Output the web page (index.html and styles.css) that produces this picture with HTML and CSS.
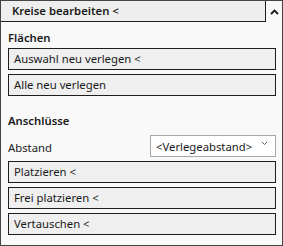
FILE: index.html
```html
<!DOCTYPE html>
<html>
<head>
<meta charset="utf-8">
<link rel="stylesheet" href="styles.css">
</head>
<body>
<div class="panel">
  <div class="header">
    <div class="tab">Kreise bearbeiten &lt;</div>
    <div class="collapse">
      <svg width="9" height="6" viewBox="0 0 9 6"><path d="M1 5 L4.5 1.5 L8 5" fill="none" stroke="#1a1a1a" stroke-width="1.8"/></svg>
    </div>
  </div>
  <div class="content">
    <div class="section-title first">Flächen</div>
    <div class="btn">Auswahl neu verlegen &lt;</div>
    <div class="btn">Alle neu verlegen</div>
    <div class="section-title second">Anschlüsse</div>
    <div class="row">
      <span class="label">Abstand</span>
      <div class="select">
        <span>&lt;Verlegeabstand&gt;</span>
        <svg width="7" height="5" viewBox="0 0 7 5"><path d="M1 1 L3.5 3.5 L6 1" fill="none" stroke="#555" stroke-width="1"/></svg>
      </div>
    </div>
    <div class="btn">Platzieren &lt;</div>
    <div class="btn">Frei platzieren &lt;</div>
    <div class="btn">Vertauschen &lt;</div>
  </div>
</div>
</body>
</html>
```
FILE: styles.css
```css
html, body {
  margin: 0;
  padding: 0;
  background: #ffffff;
}
.panel {
  box-sizing: border-box;
  width: 283px;
  height: 246px;
  border: 1px solid #444444;
  background: #f9f9f9;
  font-family: "Noto Sans", "Open Sans", sans-serif;
  font-size: 11.3px;
  color: #1a1a1a;
  display: flex;
  flex-direction: column;
}
.header {
  display: flex;
  height: 21px;
}
.tab {
  box-sizing: border-box;
  width: 265px;
  height: 21px;
  background: #eeeeee;
  border-right: 1px solid #1e1e1e;
  border-bottom: 1px solid #1e1e1e;
  padding-left: 11px;
  font-weight: 600;
  line-height: 20px;
}
.collapse {
  flex: 1;
  display: flex;
  justify-content: center;
  padding-top: 8px;
  box-sizing: border-box;
}
.content {
  display: flex;
  flex-direction: column;
  padding: 0 6px 0 7px;
  gap: 4px;
}
.section-title {
  font-weight: 600;
  line-height: 16px;
}
.section-title.first {
  margin-top: 8px;
  margin-bottom: -2px;
}
.section-title.second {
  margin-top: 13px;
  margin-bottom: 2px;
}
.btn {
  box-sizing: border-box;
  height: 22px;
  border: 1px solid #1e1e1e;
  background: #efefef;
  padding-left: 5px;
  line-height: 20px;
  white-space: nowrap;
}
.row {
  display: flex;
  justify-content: space-between;
  align-items: center;
  height: 22px;
}
.label {
  line-height: 16px;
  padding-top: 3px;
}
.select {
  box-sizing: border-box;
  width: 126px;
  height: 22px;
  border: 1px solid #a8a8a8;
  background: #ffffff;
  display: flex;
  align-items: center;
  justify-content: space-between;
  padding: 0 7px 0 5px;
}
.select svg {
  margin-top: -5px;
}
```
